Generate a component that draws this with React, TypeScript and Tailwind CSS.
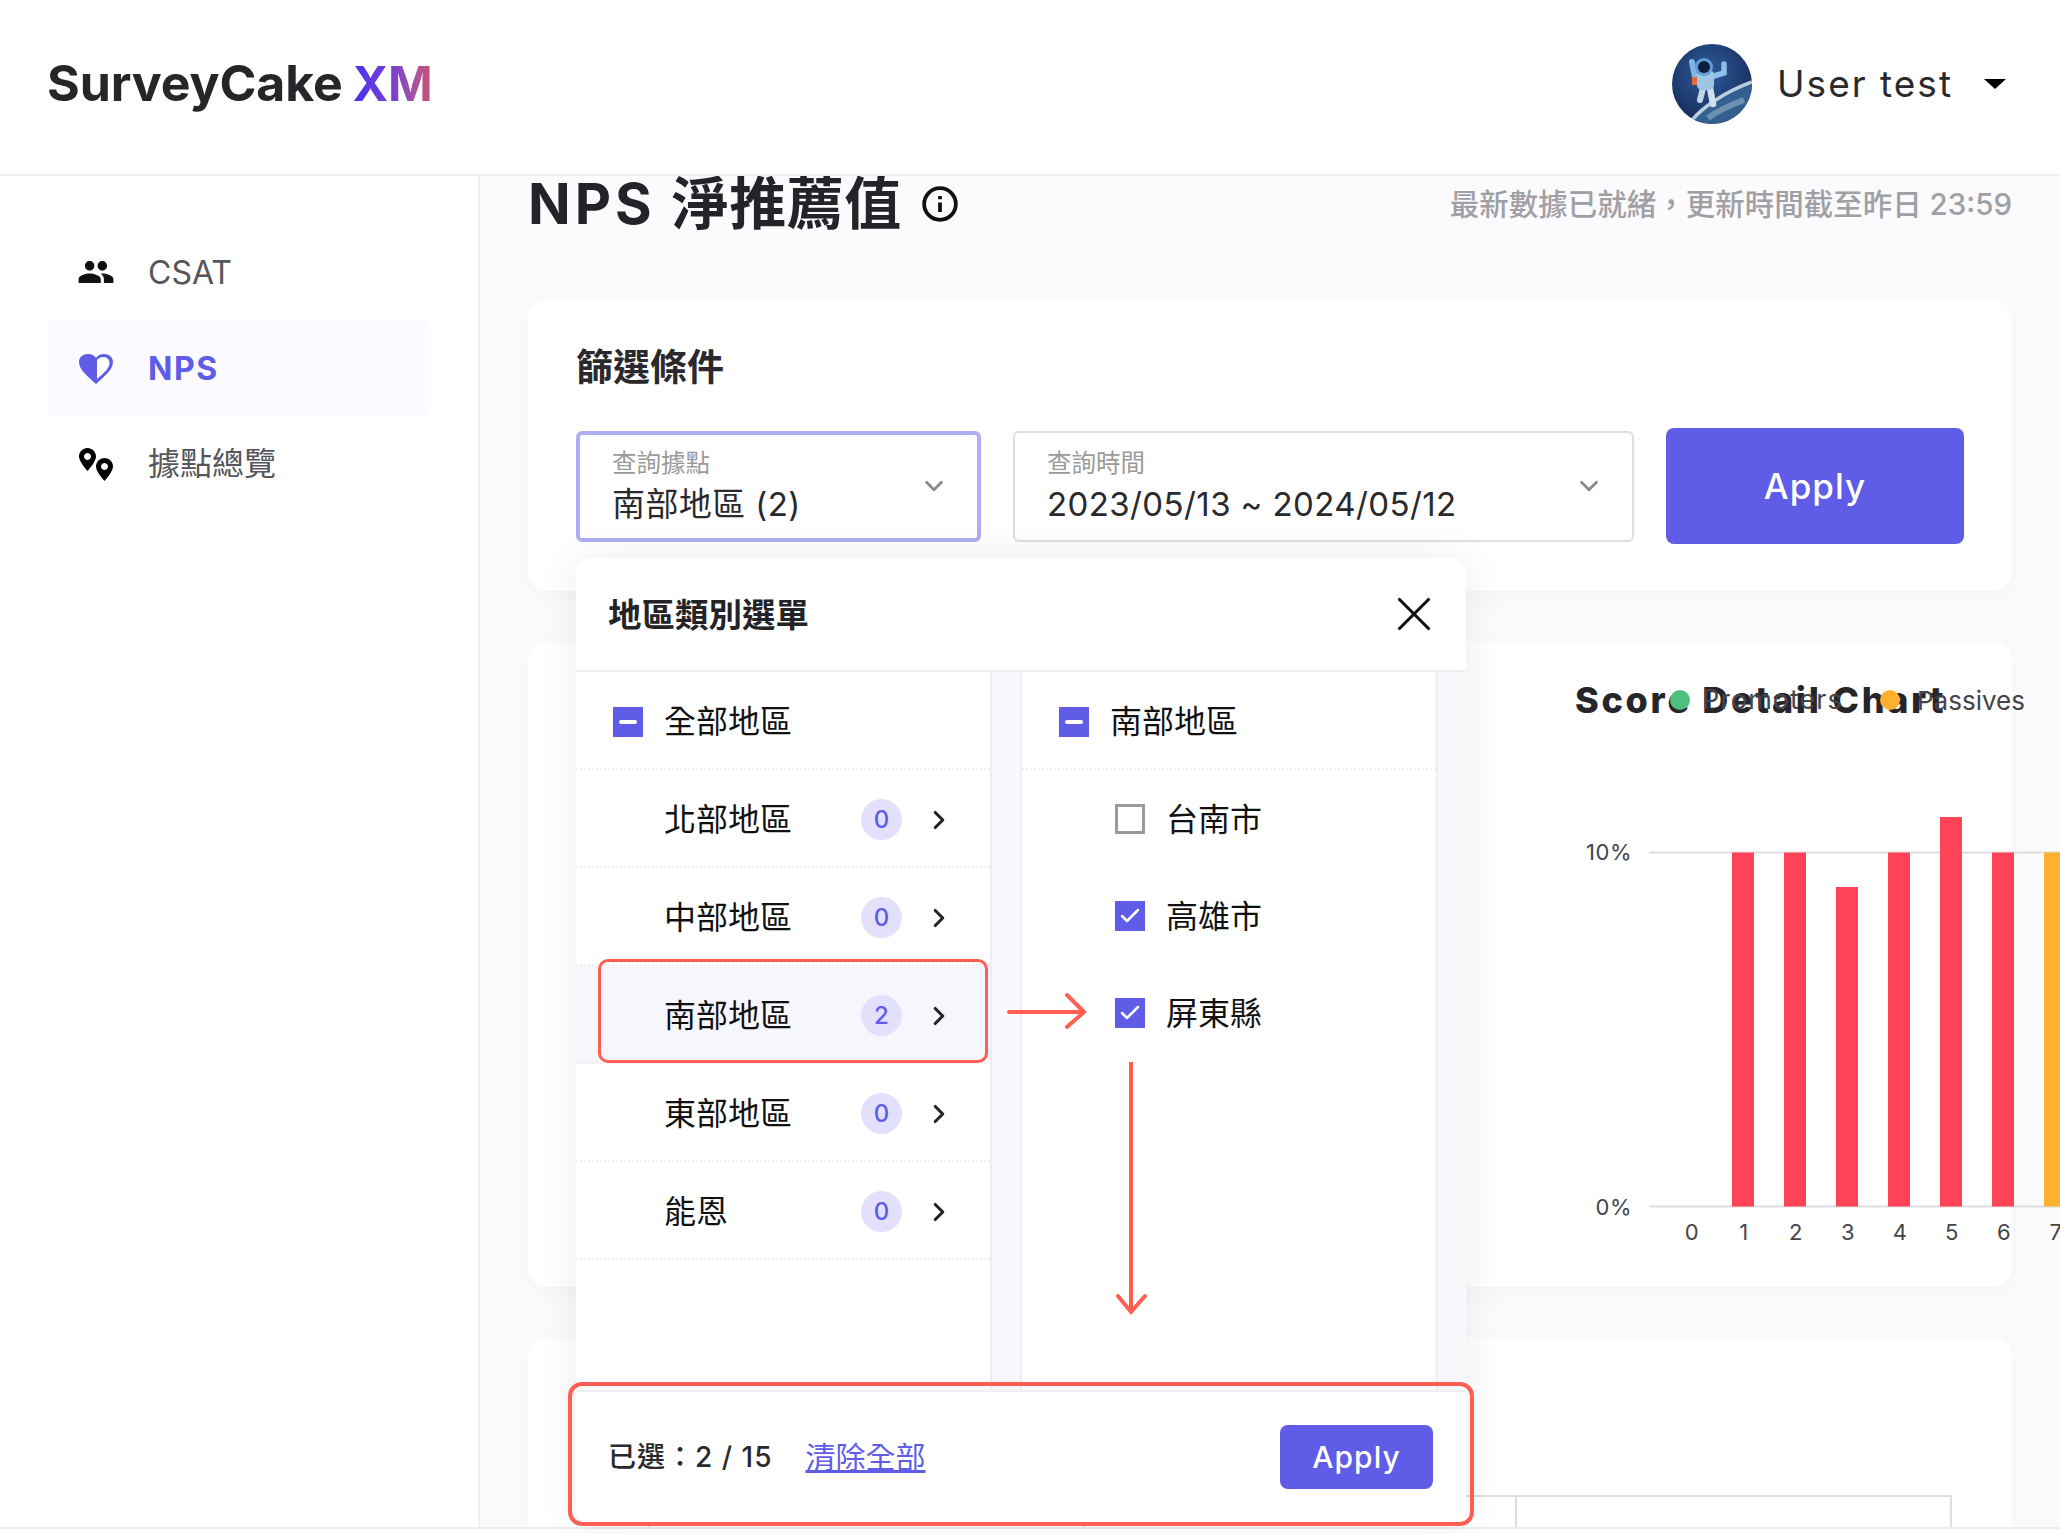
import { Check, ChevronDown, ChevronRight, X } from "lucide-react";

const regions = [
  { name: "北部地區", count: 0 },
  { name: "中部地區", count: 0 },
  { name: "南部地區", count: 2, active: true },
  { name: "東部地區", count: 0 },
  { name: "能恩", count: 0 },
];

const cities = [
  { name: "台南市", checked: false },
  { name: "高雄市", checked: true },
  { name: "屏東縣", checked: true },
];

const bars = [
  { x: 157, top: 51.5, color: "#ff4255" },
  { x: 209, top: 51.5, color: "#ff4255" },
  { x: 261, top: 86, color: "#ff4255" },
  { x: 313, top: 51.5, color: "#ff4255" },
  { x: 365, top: 16, color: "#ff4255" },
  { x: 417, top: 51.5, color: "#ff4255" },
  { x: 469, top: 51.5, color: "#ffb02e" },
];

function PartialBox() {
  return (
    <span className="flex h-[30px] w-[30px] shrink-0 items-center justify-center bg-[#5f5ce8]">
      <span className="h-[4px] w-[18px] rounded-sm bg-white" />
    </span>
  );
}

function CityBox({ checked }: { checked: boolean }) {
  if (!checked) {
    return <span className="h-[30px] w-[30px] shrink-0 border-[3px] border-[#9a9a9a] bg-white" />;
  }
  return (
    <span className="flex h-[30px] w-[30px] shrink-0 items-center justify-center bg-[#5f5ce8]">
      <Check size={24} color="white" strokeWidth={2.5} />
    </span>
  );
}

function Field({ label, value, active, className }: { label: string; value: string; active?: boolean; className: string }) {
  return (
    <div
      className={
        "flex h-[111px] items-center justify-between rounded-md bg-white pr-[28px] " +
        (active ? "border-[4px] border-[#b0aef2] pl-[32px] " : "border-2 border-[#dedee2] pl-[32px] ") +
        className
      }
    >
      <div className="flex flex-col">
        <span className="text-[24.500px] leading-[30px] text-[#9a9a9a]">{label}</span>
        <span className="mt-[5px] text-[33px] leading-[42px] tracking-[0.4px] text-[#2a2a2e]">{value}</span>
      </div>
      <ChevronDown size={30} color="#8a8a8e" strokeWidth={2.2} />
    </div>
  );
}

function Avatar() {
  return (
    <svg width="80" height="80" viewBox="0 0 80 80" className="shrink-0 rounded-full">
      <defs>
        <radialGradient id="space" cx="45%" cy="35%" r="75%">
          <stop offset="0%" stopColor="#2d5b9c" />
          <stop offset="100%" stopColor="#14244f" />
        </radialGradient>
      </defs>
      <rect width="80" height="80" fill="url(#space)" />
      <path d="M18 80 C28 66 50 50 80 38 L80 80 Z" fill="#34608f" />
      <path d="M20 76 C30 64 52 48 80 38" fill="none" stroke="#d6e8f2" strokeWidth="3.500" opacity="0.85" />
      <path d="M36 74 C44 68 56 62 72 56" fill="none" stroke="#a4c0d4" strokeWidth="6" opacity="0.5" />
      <g fill="none" strokeLinecap="round">
        <path d="M24 38 L20 18" stroke="#7fb6e4" strokeWidth="6" />
        <path d="M42 32 L52 29 L52 20" stroke="#8cc0e8" strokeWidth="5.500" />
        <path d="M31 44 L28 56" stroke="#c2d6e4" strokeWidth="6" />
        <path d="M38 44 L41 60" stroke="#cfe0ea" strokeWidth="6.500" />
      </g>
      <rect x="25" y="26" width="17" height="20" rx="5" fill="#9cc6e4" />
      <circle cx="32" cy="23" r="9" fill="#5f9fd8" />
      <circle cx="32" cy="23" r="6" fill="#0f1c42" />
      <rect x="20" y="33" width="5" height="8" fill="#e8683c" />
    </svg>
  );
}

export default function App() {
  return (
    <div className="relative h-screen w-screen overflow-hidden bg-white font-[Inter,'Noto_Sans_CJK_TC',sans-serif] text-[#242428]">
      <header className="flex h-[176px] items-center justify-between border-b-2 border-[#efeef2] pb-[7px] pl-[47px] pr-[54px]">
        <div className="flex items-baseline text-[50px] font-bold tracking-[-0.1px] text-[#26262a]">
          SurveyCake
          <span className="ml-[10px] bg-gradient-to-r from-[#4a2ff0] via-[#7a3fd0] to-[#d05070] bg-clip-text text-[48px] text-transparent">XM</span>
        </div>
        <div className="flex items-center">
          <Avatar />
          <span className="ml-[25px] text-[37px] tracking-[2px] text-[#2a2a2e]">User test</span>
          <span className="ml-[31px] h-0 w-0 border-x-[11px] border-t-[10px] border-x-transparent border-t-black" />
        </div>
      </header>

      <div className="flex h-[1353px] border-b-2 border-[#ececf0]">
        <nav className="flex w-[480px] shrink-0 flex-col border-r-2 border-[#f0eff3] pl-[47px] pt-[48px]">
          <div className="flex h-[96px] w-[383px] items-center pl-[30px] text-[32px] text-[#55555a]">
            <svg width="38" height="38" viewBox="0 0 24 24" fill="#111">
              <path d="M16 11c1.66 0 2.99-1.34 2.99-3S17.66 5 16 5c-1.66 0-3 1.34-3 3s1.34 3 3 3zm-8 0c1.66 0 2.99-1.34 2.99-3S9.66 5 8 5C6.34 5 5 6.34 5 8s1.34 3 3 3zm0 2c-2.33 0-7 1.17-7 3.5V19h14v-2.5c0-2.33-4.67-3.5-7-3.5zm8 0c-.29 0-.62.02-.97.05 1.16.84 1.97 1.97 1.97 3.45V19h6v-2.5c0-2.33-4.67-3.5-7-3.5z" />
            </svg>
            <span className="ml-[33px] pt-[1px]">CSAT</span>
          </div>
          <div className="flex h-[96px] w-[383px] items-center rounded-md bg-[#fbfafe] pl-[29px] text-[32px] font-bold tracking-[1.5px] text-[#5f5ce8]">
            <svg width="40" height="40" viewBox="0 0 40 40">
              <path d="M20 36 C10 27 3 21 3 14 C3 9 7 6 12 6 C15.500 6 18.500 7.500 20 10 C21.500 7.500 24.500 6 28 6 C33 6 37 9 37 14 C37 21 30 27 20 36 Z" fill="#5f5ce8" />
              <path d="M21 12 C22.500 10 25 9 27.500 9 C31 9 33.500 11.500 33.500 15 C33.500 20 28 25 21 31 Z" fill="#ffffff" />
            </svg>
            <span className="ml-[32px] pt-[1px]">NPS</span>
          </div>
          <div className="flex h-[96px] w-[383px] items-center pl-[29px] text-[32px] text-[#55555a]">
            <svg width="40" height="40" viewBox="0 0 40 40" fill="#000">
              <path fillRule="evenodd" d="M11.500 4 C6.800 4 3 7.800 3 12.500 C3 18 11.500 27 11.500 27 C11.500 27 20 18 20 12.500 C20 7.800 16.200 4 11.500 4 Z M11.500 9 A3.500 3.500 0 1 1 11.490 9 Z" />
              <path fillRule="evenodd" d="M28.500 14 C23.800 14 20 17.800 20 22.500 C20 28 28.500 37 28.500 37 C28.500 37 37 28 37 22.500 C37 17.800 33.200 14 28.500 14 Z M28.500 19 A3.500 3.500 0 1 1 28.490 19 Z" />
            </svg>
            <span className="ml-[32px]">據點總覽</span>
          </div>
        </nav>

        <main className="flex min-w-0 flex-1 flex-col overflow-hidden bg-[#fbfafd] px-[48px]">
          <div className="flex h-[56px] shrink-0 items-center justify-between">
            <div className="flex items-center">
              <h1 className="flex items-center gap-[16px] text-[56px] font-bold leading-[56px] text-[#242428]">
                <span className="tracking-[4px]">NPS</span>
                <span className="text-[57px] tracking-[0.5px]">淨推薦值</span>
              </h1>
              <svg className="ml-[19px]" width="38" height="38" viewBox="0 0 24 24" fill="none" stroke="#111" strokeWidth="2.400">
                <circle cx="12" cy="12" r="10" />
                <path d="M12 11v6M12 7v2" />
              </svg>
            </div>
            <span className="text-[29.500px] font-medium text-[#a0a0a4]">最新數據已就緒，更新時間截至昨日 23:59</span>
          </div>

          <section className="mt-[68px] h-[291px] shrink-0 rounded-[20px] bg-white px-[48px] pt-[45px] shadow-[0_6px_24px_rgba(0,0,0,0.03)]">
            <h2 className="text-[37px] font-bold leading-[46px] text-[#2a2a2e]">篩選條件</h2>
            <div className="mt-[37px] flex items-center">
              <Field label="查詢據點" value="南部地區 (2)" active className="w-[405px]" />
              <Field label="查詢時間" value="2023/05/13 ~ 2024/05/12" className="ml-[32px] w-[621px]" />
              <button className="ml-[32px] flex h-[116px] w-[298px] items-center justify-center rounded-lg bg-[#5f5ce8] text-[35px] font-medium tracking-[1px] text-white">
                Apply
              </button>
            </div>
          </section>

          <section className="mt-[50px] h-[646px] shrink-0 rounded-[20px] bg-white pl-[1047px] pt-[38px] shadow-[0_6px_24px_rgba(0,0,0,0.03)]">
            <div className="relative h-[42px] w-[370px] whitespace-nowrap">
              <h3 className="text-[36px] font-extrabold leading-[42px] tracking-[2.7px] text-[#26262a]">Score Detail Chart</h3>
              <div className="absolute left-[95px] top-[0px] flex h-[42px] items-center text-[#44444a]">
                <span className="h-[20px] w-[20px] rounded-full bg-[#4bc07f]" />
                <span className="ml-[12px] w-[178px] text-[27px] tracking-[1px]">Promoters</span>
                <span className="h-[20px] w-[20px] rounded-full bg-[#ffb02e]" />
                <span className="ml-[17px] text-[26px]">Passives</span>
              </div>
            </div>
            <svg width="485" height="460" className="mt-[80px] overflow-visible">
              <line x1="74" y1="51.5" x2="485" y2="51.5" stroke="#dedee2" strokeWidth="2" />
              <line x1="74" y1="405.500" x2="485" y2="405.500" stroke="#dedee2" strokeWidth="2" />
              {bars.map((bar) => (
                <rect key={bar.x} x={bar.x} y={bar.top} width="22" height={405.5 - bar.top} fill={bar.color} />
              ))}
              <g fontSize="22" fill="#44444a" letterSpacing="0.5">
                <text x="57" y="59" textAnchor="end">10%</text>
                <text x="57" y="414" textAnchor="end">0%</text>
                {[0, 1, 2, 3, 4, 5, 6, 7].map((n) => (
                  <text key={n} x={117 + n * 52} y="439" textAnchor="middle">{n}</text>
                ))}
              </g>
            </svg>
          </section>

          <section className="mt-[50px] h-[400px] shrink-0 rounded-[20px] bg-white pl-[120px] pr-[60px] pt-[158px] shadow-[0_6px_24px_rgba(0,0,0,0.03)]">
            <div className="grid h-[60px] grid-cols-3 border-x-2 border-t-2 border-[#dedee2]">
              <div />
              <div className="border-x-2 border-[#dedee2]" />
              <div />
            </div>
          </section>
        </main>
      </div>

      {/* region menu, over the page */}
      <div className="absolute left-[576px] top-[558px] flex h-[966px] w-[890px] flex-col rounded-[16px] bg-white text-[#111114] shadow-[0_0_40px_rgba(0,0,0,0.08)]">
        <div className="flex h-[114px] shrink-0 items-center justify-between border-b-2 border-[#f0eff3] pl-[32px] pr-[23px]">
          <span className="pt-[3px] text-[33.500px] font-bold text-[#242428]">地區類別選單</span>
          <X size={58} color="#111" strokeWidth={1.300} />
        </div>
        <div className="flex min-h-0 flex-1 bg-[#f9f8fc]">
          <div className="w-[416px] shrink-0 border-r-2 border-[#eeedf1] bg-white">
            <div className="flex h-[98px] items-center gap-[21px] border-b-2 border-dotted border-[#efeef2] pl-[37px] pt-[3px] text-[32px]">
              <PartialBox />
              全部地區
            </div>
            {regions.map((region) => (
              <div
                key={region.name}
                className={
                  "flex h-[98px] items-center border-b-2 border-dotted border-[#efeef2] pl-[88px] pr-[36px] pt-[3px] text-[32px] " +
                  (region.active ? "bg-[#f8f6fd]" : "")
                }
              >
                {region.name}
                <span className="ml-auto flex h-[41px] w-[41px] items-center justify-center rounded-full bg-[#e2e0fb] text-[24px] font-medium text-[#5f5ce8]">
                  {region.count}
                </span>
                <ChevronRight className="ml-[22px]" size={30} color="#242428" strokeWidth={2.500} />
              </div>
            ))}
          </div>
          <div className="ml-[28px] w-[418px] shrink-0 border-x-2 border-[#eeedf1] bg-white">
            <div className="flex h-[98px] items-center gap-[21px] border-b-2 border-dotted border-[#efeef2] pl-[37px] pt-[3px] text-[32px]">
              <PartialBox />
              南部地區
            </div>
            {cities.map((city) => (
              <div key={city.name} className="flex h-[97px] items-center gap-[21px] pl-[93px] text-[32px]">
                <CityBox checked={city.checked} />
                <span className="pt-[2px]">{city.name}</span>
              </div>
            ))}
          </div>
        </div>
        <div className="flex h-[134px] shrink-0 items-center rounded-b-[16px] border-t-2 border-[#eeedf1] bg-white pb-[2px] pl-[32px] pr-[33px]">
          <span className="text-[28px] font-medium tracking-[1px] text-[#2a2a2e]">已選：2 / 15</span>
          <a className="ml-[33px] text-[30px] text-[#5f5ce8] underline">清除全部</a>
          <button className="ml-auto flex h-[64px] w-[153px] items-center justify-center rounded-lg bg-[#5f5ce8] text-[30px] font-medium tracking-[1px] text-white">
            Apply
          </button>
        </div>

        {/* red call-outs */}
        <div className="pointer-events-none absolute left-[22px] top-[401px] h-[104px] w-[390px] rounded-[10px] border-[3px] border-[#ff5f52]" />
        <div className="pointer-events-none absolute left-[-8px] top-[824px] h-[144px] w-[906px] rounded-[14px] border-[4px] border-[#ff5f52]" />
        <svg className="pointer-events-none absolute left-[431px] top-[431px]" width="82" height="46" fill="none" stroke="#ff5f52" strokeWidth="4" strokeLinecap="round">
          <path d="M2 23 H76 M60 6 L77 23 L60 38" />
        </svg>
        <svg className="pointer-events-none absolute left-[540px] top-[504px]" width="32" height="254" fill="none" stroke="#ff5f52" strokeWidth="4" strokeLinecap="round">
          <path d="M15 0 V248 M2 234 L15 250 L29 234" />
        </svg>
      </div>
    </div>
  );
}
